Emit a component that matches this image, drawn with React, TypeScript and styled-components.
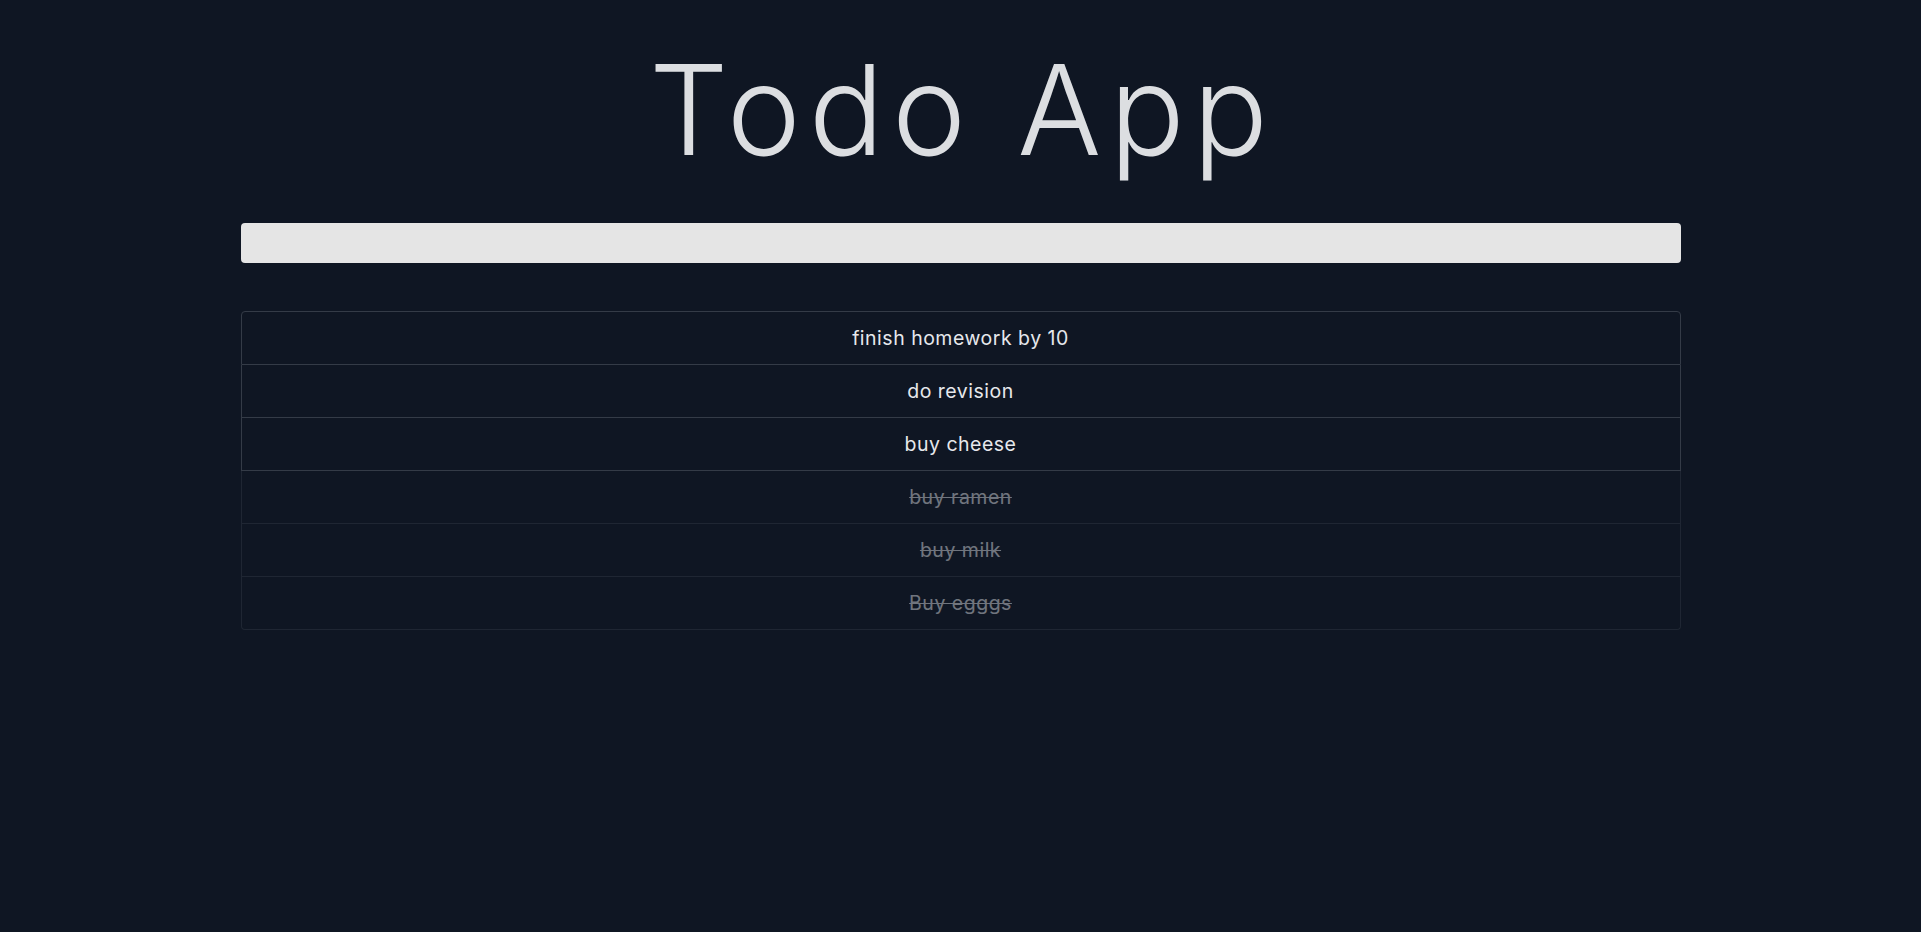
import React from "react";
import styled, { createGlobalStyle } from "styled-components";

const GlobalStyle = createGlobalStyle`
  html, body {
    margin: 0;
    padding: 0;
    background: #0f1623;
    min-height: 100%;
  }
  body {
    font-family: "Inter", "Open Sans", sans-serif;
    color: #e5e7eb;
  }
`;

const Page = styled.main`
  min-height: 932px;
  background: #0f1623;
  display: flex;
  flex-direction: column;
  align-items: center;
`;

const Container = styled.div`
  width: 1440px;
  display: flex;
  flex-direction: column;
`;

const Title = styled.h1`
  margin: 0;
  padding-top: 40px;
  padding-left: 4px;
  font-family: "Inter", sans-serif;
  font-weight: 300;
  font-size: 125px;
  line-height: 140px;
  letter-spacing: 8px;
  text-align: center;
  color: #dcdee1;
`;

const Input = styled.input`
  margin-top: 43px;
  height: 40px;
  border: none;
  border-radius: 4px;
  background: #e5e5e5;
  outline: none;
  padding: 0 12px;
  font-family: "Inter", sans-serif;
  font-size: 18px;
`;

const List = styled.ul`
  list-style: none;
  margin: 48px 0 0;
  padding: 0;
  display: flex;
  flex-direction: column;
`;

const Item = styled.li<{ $done: boolean }>`
  height: 52px;
  display: flex;
  align-items: center;
  justify-content: center;
  border: 1px solid #343b47;
  border-top: none;
  font-family: "Inter", sans-serif;
  font-size: 19.5px;
  color: #e6e8ec;
  text-decoration: ${(p) => (p.$done ? "line-through" : "none")};
  opacity: ${(p) => (p.$done ? 0.45 : 1)};
  letter-spacing: 0.5px;

  &:first-child {
    border-top: 1px solid #343b47;
    border-radius: 4px 4px 0 0;
  }
  &:last-child {
    border-radius: 0 0 4px 4px;
  }
`;

const todos = [
  { text: "finish homework by 10", done: false },
  { text: "do revision", done: false },
  { text: "buy cheese", done: false },
  { text: "buy ramen", done: true },
  { text: "buy milk", done: true },
  { text: "Buy egggs", done: true },
];

export default function App() {
  return (
    <>
      <GlobalStyle />
      <Page>
        <Container>
          <Title>Todo App</Title>
          <Input type="text" />
          <List>
            {todos.map((t) => (
              <Item key={t.text} $done={t.done}>
                {t.text}
              </Item>
            ))}
          </List>
        </Container>
      </Page>
    </>
  );
}
